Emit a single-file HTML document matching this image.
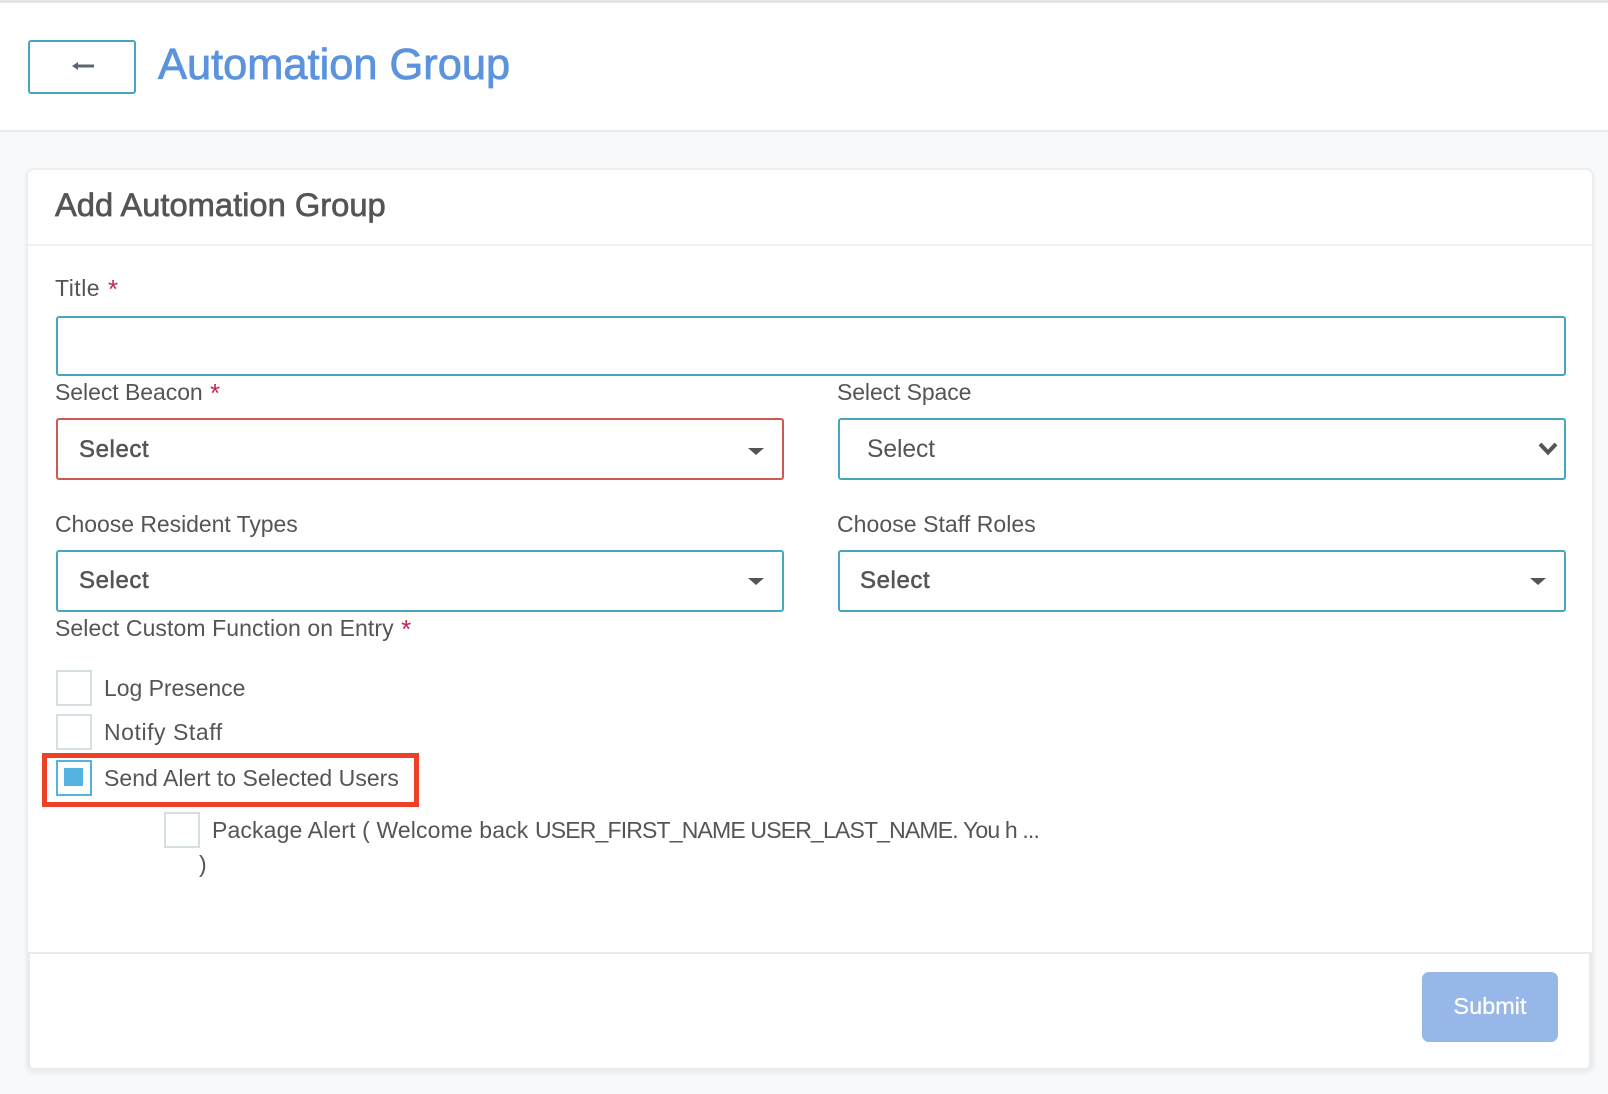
<!DOCTYPE html>
<html lang="en">
<head>
<meta charset="utf-8">
<title>Automation Group</title>
<style>
html,body{margin:0;padding:0;width:1608px;height:1094px;overflow:hidden;background:#f8f9fb;font-family:"Liberation Sans",Arial,sans-serif;color:#555}
*{box-sizing:border-box}
.a{position:absolute}
.t{position:absolute;white-space:nowrap;line-height:30px;height:30px;font-size:23px;letter-spacing:-.05px;color:#555}
.star{color:#c0284f;font-size:26px;line-height:0;position:relative;top:2px;margin-left:1px;letter-spacing:0}
.box{position:absolute;border:2px solid #46a6c0;border-radius:3px;background:#fff}
.sel{position:absolute;white-space:nowrap;font-size:24px;line-height:30px;color:#555;-webkit-text-stroke:.55px #555;letter-spacing:.6px}
.car{position:absolute;width:0;height:0;border-left:8px solid transparent;border-right:8px solid transparent;border-top:7px solid #555}
.cb{position:absolute;width:36px;height:36px;border:2px solid #d3dfe1;background:#fff}
</style>
</head>
<body>
<div class="a" style="left:0;top:0;width:1608px;height:132px;background:#fff;border-bottom:2px solid #e9ecee"></div>
<div class="a" style="left:0;top:0;width:1608px;height:3px;background:#e3e4e5"></div>

<div class="box" style="left:28px;top:40px;width:108px;height:54px"></div>
<svg class="a" style="left:71px;top:59px" width="24" height="14" viewBox="0 0 24 14"><path d="M1 7 L7 3 L7 5.5 L23 5.5 L23 8.5 L7 8.5 L7 11 Z" fill="#5b6770"/></svg>
<div class="a" style="left:158px;top:38px;font-size:43.4px;line-height:54px;white-space:nowrap;color:#5b93de;-webkit-text-stroke:.8px #5b93de">Automation Group</div>

<div class="a" style="left:26px;top:168px;width:1568px;height:903px;background:#fff;border:2px solid #eceef0;border-radius:8px;box-shadow:0 2px 4px rgba(0,0,0,.06)"></div>
<div class="a" style="left:28px;top:244px;width:1564px;height:2px;background:#eef0f2"></div>
<div class="a" style="left:55px;top:185px;font-size:32.7px;line-height:40px;white-space:nowrap;color:#555;-webkit-text-stroke:.7px #555">Add Automation Group</div>

<div class="t" style="left:55px;top:273px;letter-spacing:.5px">Title <span class="star">*</span></div>
<div class="box" style="left:56px;top:316px;width:1510px;height:60px"></div>

<div class="t" style="left:55px;top:377px">Select Beacon <span class="star">*</span></div>
<div class="t" style="left:837px;top:377px;letter-spacing:-.1px">Select Space</div>
<div class="box" style="left:56px;top:418px;width:728px;height:62px;border-color:#cf5a52"></div>
<div class="box" style="left:838px;top:418px;width:728px;height:62px"></div>
<div class="sel" style="left:79px;top:435px">Select</div>
<div class="car" style="left:748px;top:448px"></div>
<div class="t" style="left:867px;top:435px;font-size:24.6px">Select</div>
<svg class="a" style="left:1537px;top:441px" width="22" height="16" viewBox="0 0 22 16"><path d="M3 3 L11 11.5 L19 3" fill="none" stroke="#555" stroke-width="4"/></svg>

<div class="t" style="left:55px;top:509px">Choose Resident Types</div>
<div class="t" style="left:837px;top:509px;letter-spacing:.06px">Choose Staff Roles</div>
<div class="box" style="left:56px;top:550px;width:728px;height:62px"></div>
<div class="box" style="left:838px;top:550px;width:728px;height:62px"></div>
<div class="sel" style="left:79px;top:565.5px">Select</div>
<div class="car" style="left:748px;top:578px"></div>
<div class="sel" style="left:860px;top:565.5px">Select</div>
<div class="car" style="left:1530px;top:578px"></div>

<div class="t" style="left:55px;top:613px;letter-spacing:.08px">Select Custom Function on Entry <span class="star">*</span></div>

<div class="cb" style="left:56px;top:670px"></div>
<div class="t" style="left:104px;top:673px">Log Presence</div>
<div class="cb" style="left:56px;top:714px"></div>
<div class="t" style="left:104px;top:717px;letter-spacing:.55px">Notify Staff</div>

<div class="a" style="left:42px;top:753px;width:377px;height:54px;border:5px solid #ee4027"></div>
<div class="cb" style="left:56px;top:760px;border-color:#55b3e0"></div>
<div class="a" style="left:64px;top:768px;width:19px;height:18px;background:#55b3e0"></div>
<div class="t" style="left:104px;top:763px;letter-spacing:.03px">Send Alert to Selected Users</div>

<div class="cb" style="left:164px;top:812px"></div>
<div class="t" style="left:212px;top:815px;letter-spacing:.13px">Package Alert ( Welcome back <span style="letter-spacing:-.83px">USER_FIRST_NAME USER_LAST_NAME. You h ...</span></div>
<div class="t" style="left:199px;top:849px">)</div>

<div class="a" style="left:28px;top:952px;width:1564px;height:118px;background:#fff;border-top:2px solid #e8eaec;border-left:2px solid #e8eaec;border-right:3px solid #e8eaec;border-bottom:2px solid #e8eaec;border-radius:0 0 6px 6px"></div>
<div class="a" style="left:1422px;top:972px;width:136px;height:70px;background:#96b7e7;border-radius:7px;color:#fff;font-size:23.5px;line-height:68px;text-align:center;-webkit-text-stroke:.25px #fff">Submit</div>
</body>
</html>
